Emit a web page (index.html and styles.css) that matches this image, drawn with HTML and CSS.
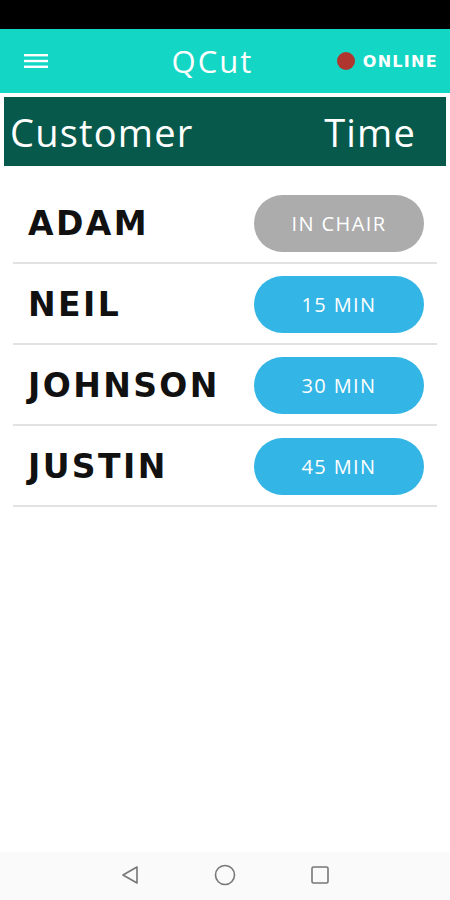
FILE: index.html
```html
<!DOCTYPE html>
<html>
<head>
<meta charset="utf-8">
<link rel="stylesheet" href="styles.css">
</head>
<body>
<div class="screen">
  <div class="statusbar"></div>
  <header class="appbar">
    <svg class="menu" width="24" height="16" viewBox="0 0 24 16"><rect x="0" y="1" width="24" height="2.4" fill="#fff"/><rect x="0" y="6.8" width="24" height="2.4" fill="#fff"/><rect x="0" y="12.6" width="24" height="2.4" fill="#fff"/></svg>
    <div class="title">QCut</div>
    <div class="status"><span class="dot"></span><span class="online">ONLINE</span></div>
  </header>
  <div class="tablehead">
    <span>Customer</span>
    <span>Time</span>
  </div>
  <ul class="list">
    <li class="row"><span class="name">ADAM</span><span class="pill gray">IN CHAIR</span></li>
    <li class="row"><span class="name">NEIL</span><span class="pill blue">15 MIN</span></li>
    <li class="row"><span class="name">JOHNSON</span><span class="pill blue">30 MIN</span></li>
    <li class="row"><span class="name">JUSTIN</span><span class="pill blue">45 MIN</span></li>
  </ul>
  <div class="spacer"></div>
  <nav class="navbar">
    <svg width="20" height="20" viewBox="0 0 20 20"><path d="M17 2 L3 10 L17 18 Z" fill="none" stroke="#777" stroke-width="1.6" stroke-linejoin="round"/></svg>
    <svg width="22" height="22" viewBox="0 0 22 22"><circle cx="11" cy="11" r="9.5" fill="none" stroke="#777" stroke-width="1.6"/></svg>
    <svg width="20" height="20" viewBox="0 0 20 20"><rect x="2" y="2" width="16" height="16" rx="1.5" fill="none" stroke="#777" stroke-width="1.6"/></svg>
  </nav>
</div>
</body>
</html>
```
FILE: styles.css
```css
* { box-sizing: border-box; }
html, body { margin: 0; padding: 0; }
body { font-family: "DejaVu Sans", "Noto Sans", sans-serif; background: #fff; }
.screen { width: 450px; height: 900px; display: flex; flex-direction: column; overflow: hidden; }
.statusbar { height: 29px; background: #000; flex: none; }
.appbar { height: 64px; background: #14d6c4; display: flex; align-items: center; padding: 0 13px 0 24px; flex: none; }
.menu { flex: none; }
.title { flex: 1; text-align: center; color: #fff; font-size: 31px; letter-spacing: 2px; font-family: "Open Sans", sans-serif; padding-left: 40px; }
.status { display: flex; align-items: center; gap: 8px; }
.dot { width: 18px; height: 18px; border-radius: 50%; background: #b0352e; }
.online { color: #fff; font-weight: bold; font-size: 16px; letter-spacing: 1.3px; margin-right: -1px; }
.tablehead { margin: 4px 4px 0; height: 69px; background: #075a4b; display: flex; justify-content: space-between; align-items: center; padding: 0 30px 0 6px; color: #fff; font-family: "Open Sans", sans-serif; font-size: 38px; letter-spacing: 1.2px; flex: none; }
.list { list-style: none; margin: 17px 13px 0; padding: 0; }
.row { height: 81px; display: flex; align-items: center; justify-content: space-between; border-bottom: 2px solid #e2e2e2; padding: 2px 13px 0 15px; }
.name { font-weight: bold; font-size: 33px; color: #111; letter-spacing: 2.4px; }
.pill { width: 170px; height: 57px; border-radius: 29px; display: flex; align-items: center; justify-content: center; color: #fff; font-size: 20px; letter-spacing: 1.4px; font-family: "Open Sans", sans-serif; }
.gray { background: #acacac; }
.blue { background: #33b5e5; }
.spacer { flex: 1; }
.navbar { height: 48px; background: #fafafa; display: flex; align-items: center; justify-content: center; gap: 74px; flex: none; padding-bottom: 2px; }
```
